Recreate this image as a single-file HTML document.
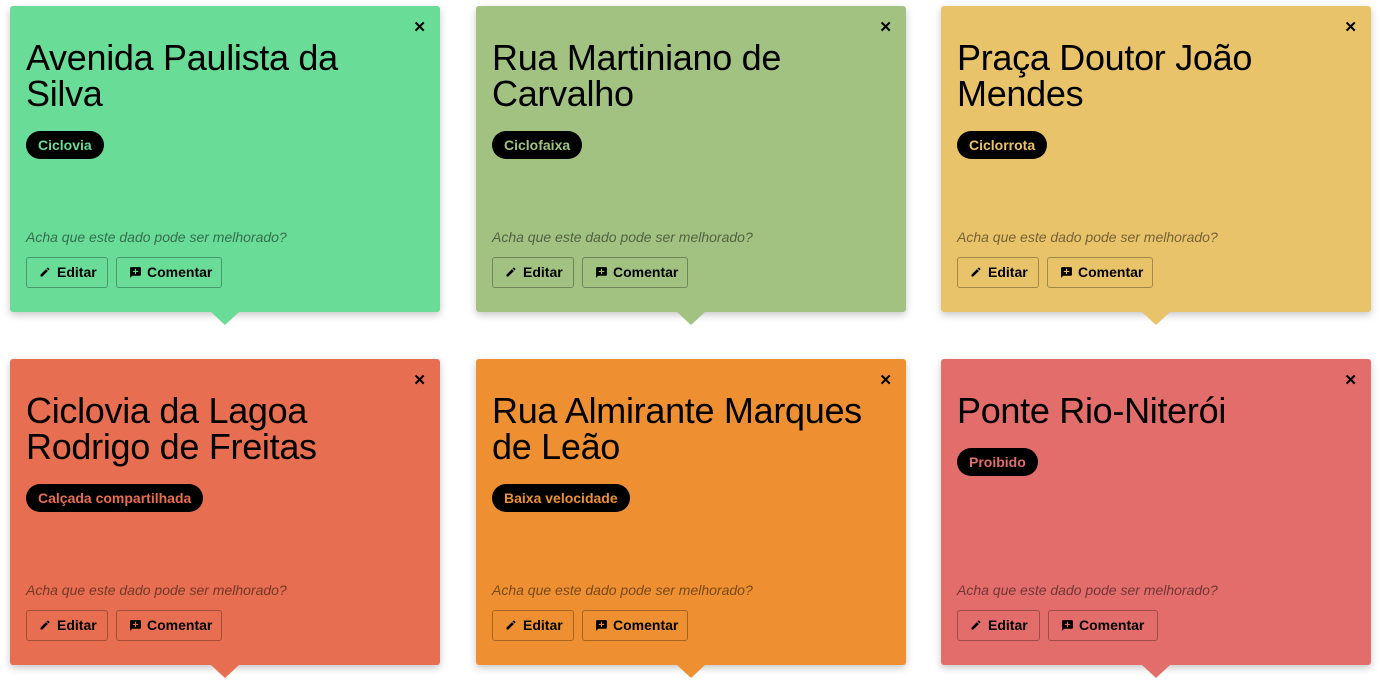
<!DOCTYPE html>
<html><head><meta charset="utf-8"><style>
*{margin:0;padding:0;box-sizing:border-box}
body{width:1381px;height:693px;background:#fff;font-family:"Liberation Sans",sans-serif;position:relative;overflow:hidden}
.c{position:absolute;width:430px;height:306px;border-radius:3px;box-shadow:0 3px 8px rgba(0,0,0,.22)}
.c:after{content:"";position:absolute;left:201px;bottom:-13px;border-left:14px solid transparent;border-right:14px solid transparent;border-top:13px solid var(--bg)}
.c{background:var(--bg)}
.x{position:absolute;right:14px;top:12px;font-size:15px;font-weight:bold;color:#000}
h1{position:absolute;left:16px;top:34px;width:385px;font-size:36px;line-height:36px;font-weight:normal;color:#000;letter-spacing:-0.3px}
.b{position:absolute;left:16px;height:28px;border-radius:14px;background:#000;color:var(--bg);font-size:14px;font-weight:bold;line-height:28px;padding:0 12px}
.q{position:absolute;left:16px;top:223px;font-size:14px;font-style:italic;color:rgba(0,0,0,.5)}
.bt{position:absolute;top:251px;height:31px;border:1px solid rgba(0,0,0,.3);border-radius:3px;font-size:14px;font-weight:bold;line-height:29px;color:#000;padding-left:12px}
.bt svg{position:absolute;top:8px;left:12px}
.bt span{position:absolute;left:30px}
</style></head><body>

<div class="c" style="left:10px;top:6px;--bg:#69dc98">
<div class="x">✕</div><h1>Avenida Paulista da Silva</h1><div class="b" style="top:125px">Ciclovia</div>
<div class="q">Acha que este dado pode ser melhorado?</div>
<div class="bt" style="left:16px;width:82px"><svg width="12" height="12" viewBox="0 0 24 24"><path d="M3 17.25V21h3.75L17.8 9.94l-3.75-3.75zM20.7 7.04a1 1 0 000-1.41l-2.34-2.34a1 1 0 00-1.41 0l-1.830 1.83 3.75 3.75z"/></svg><span>Editar</span></div>
<div class="bt" style="left:106px;width:106px"><svg width="13" height="13" viewBox="0 0 24 24"><path d="M20 2H4a2 2 0 00-2 2v18l4-4h14a2 2 0 002-2V4a2 2 0 00-2-2zm-3 9h-4v4h-2v-4H7V9h4V5h2v4h4z"/></svg><span>Comentar</span></div>
</div>

<div class="c" style="left:476px;top:6px;--bg:#a2c282">
<div class="x">✕</div><h1>Rua Martiniano de Carvalho</h1><div class="b" style="top:125px">Ciclofaixa</div>
<div class="q">Acha que este dado pode ser melhorado?</div>
<div class="bt" style="left:16px;width:82px"><svg width="12" height="12" viewBox="0 0 24 24"><path d="M3 17.25V21h3.75L17.8 9.94l-3.75-3.75zM20.7 7.04a1 1 0 000-1.41l-2.34-2.34a1 1 0 00-1.41 0l-1.83 1.83 3.75 3.75z"/></svg><span>Editar</span></div>
<div class="bt" style="left:106px;width:106px"><svg width="13" height="13" viewBox="0 0 24 24"><path d="M20 2H4a2 2 0 00-2 2v18l4-4h14a2 2 0 002-2V4a2 2 0 00-2-2zm-3 9h-4v4h-2v-4H7V9h4V5h2v4h4z"/></svg><span>Comentar</span></div>
</div>

<div class="c" style="left:941px;top:6px;--bg:#e8c36a">
<div class="x">✕</div><h1>Praça Doutor João Mendes</h1><div class="b" style="top:125px">Ciclorrota</div>
<div class="q">Acha que este dado pode ser melhorado?</div>
<div class="bt" style="left:16px;width:82px"><svg width="12" height="12" viewBox="0 0 24 24"><path d="M3 17.25V21h3.75L17.8 9.94l-3.75-3.75zM20.7 7.04a1 1 0 000-1.41l-2.34-2.34a1 1 0 00-1.41 0l-1.83 1.83 3.75 3.75z"/></svg><span>Editar</span></div>
<div class="bt" style="left:106px;width:106px"><svg width="13" height="13" viewBox="0 0 24 24"><path d="M20 2H4a2 2 0 00-2 2v18l4-4h14a2 2 0 002-2V4a2 2 0 00-2-2zm-3 9h-4v4h-2v-4H7V9h4V5h2v4h4z"/></svg><span>Comentar</span></div>
</div>

<div class="c" style="left:10px;top:359px;--bg:#e76e50">
<div class="x">✕</div><h1>Ciclovia da Lagoa Rodrigo de Freitas</h1><div class="b" style="top:125px">Calçada compartilhada</div>
<div class="q">Acha que este dado pode ser melhorado?</div>
<div class="bt" style="left:16px;width:82px"><svg width="12" height="12" viewBox="0 0 24 24"><path d="M3 17.25V21h3.75L17.8 9.94l-3.75-3.75zM20.7 7.04a1 1 0 000-1.41l-2.34-2.34a1 1 0 00-1.41 0l-1.83 1.83 3.75 3.75z"/></svg><span>Editar</span></div>
<div class="bt" style="left:106px;width:106px"><svg width="13" height="13" viewBox="0 0 24 24"><path d="M20 2H4a2 2 0 00-2 2v18l4-4h14a2 2 0 002-2V4a2 2 0 00-2-2zm-3 9h-4v4h-2v-4H7V9h4V5h2v4h4z"/></svg><span>Comentar</span></div>
</div>

<div class="c" style="left:476px;top:359px;--bg:#ee9032">
<div class="x">✕</div><h1>Rua Almirante Marques de Leão</h1><div class="b" style="top:125px">Baixa velocidade</div>
<div class="q">Acha que este dado pode ser melhorado?</div>
<div class="bt" style="left:16px;width:82px"><svg width="12" height="12" viewBox="0 0 24 24"><path d="M3 17.25V21h3.75L17.8 9.94l-3.75-3.75zM20.7 7.04a1 1 0 000-1.41l-2.34-2.34a1 1 0 00-1.41 0l-1.83 1.83 3.75 3.75z"/></svg><span>Editar</span></div>
<div class="bt" style="left:106px;width:106px"><svg width="13" height="13" viewBox="0 0 24 24"><path d="M20 2H4a2 2 0 00-2 2v18l4-4h14a2 2 0 002-2V4a2 2 0 00-2-2zm-3 9h-4v4h-2v-4H7V9h4V5h2v4h4z"/></svg><span>Comentar</span></div>
</div>

<div class="c" style="left:941px;top:359px;--bg:#e36d6a">
<div class="x">✕</div><h1>Ponte Rio-Niterói</h1><div class="b" style="top:89px">Proibido</div>
<div class="q">Acha que este dado pode ser melhorado?</div>
<div class="bt" style="left:16px;width:83px"><svg width="12" height="12" viewBox="0 0 24 24"><path d="M3 17.25V21h3.75L17.8 9.94l-3.75-3.75zM20.7 7.04a1 1 0 000-1.41l-2.34-2.34a1 1 0 00-1.41 0l-1.83 1.83 3.75 3.75z"/></svg><span>Editar</span></div>
<div class="bt" style="left:107px;width:110px"><svg width="13" height="13" viewBox="0 0 24 24"><path d="M20 2H4a2 2 0 00-2 2v18l4-4h14a2 2 0 002-2V4a2 2 0 00-2-2zm-3 9h-4v4h-2v-4H7V9h4V5h2v4h4z"/></svg><span>Comentar</span></div>
</div>

</body></html>
